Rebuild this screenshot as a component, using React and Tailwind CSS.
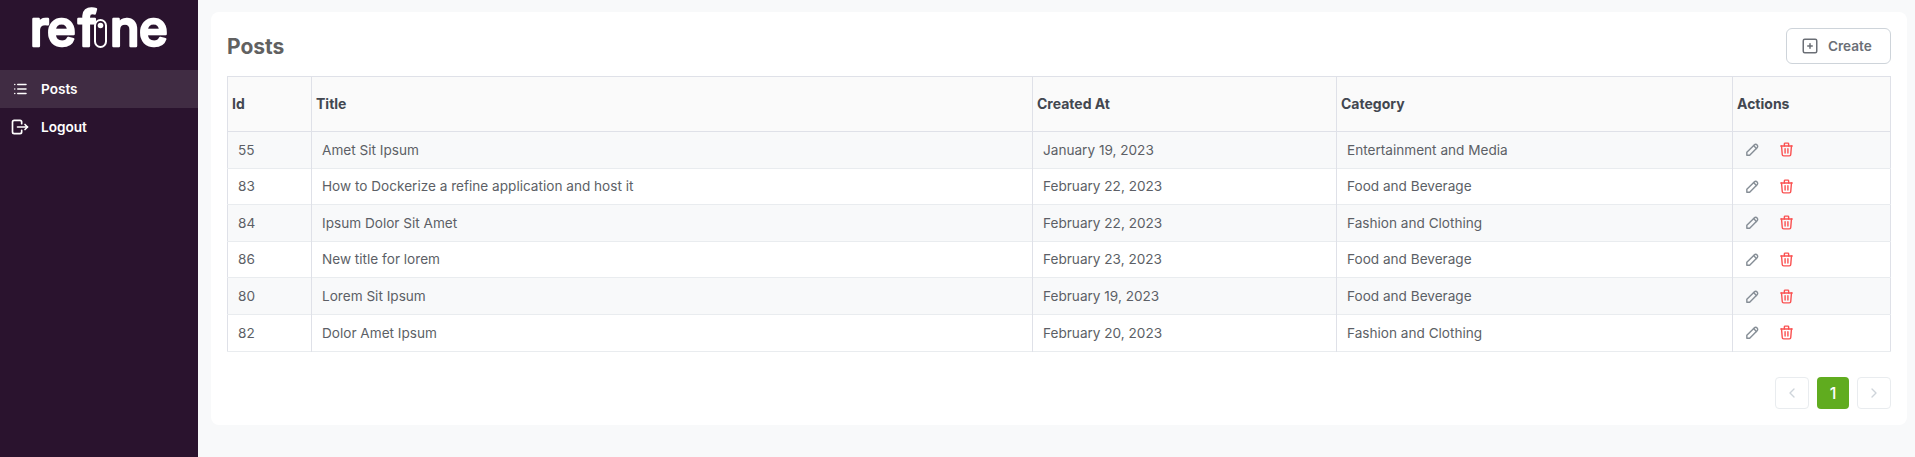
import { TbList, TbLogout, TbSquarePlus, TbPencil, TbTrash, TbChevronLeft, TbChevronRight } from "react-icons/tb";

const rows = [
  { id: 55, title: "Amet Sit Ipsum", createdAt: "January 19, 2023", category: "Entertainment and Media" },
  { id: 83, title: "How to Dockerize a refine application and host it", createdAt: "February 22, 2023", category: "Food and Beverage" },
  { id: 84, title: "Ipsum Dolor Sit Amet", createdAt: "February 22, 2023", category: "Fashion and Clothing" },
  { id: 86, title: "New title for lorem", createdAt: "February 23, 2023", category: "Food and Beverage" },
  { id: 80, title: "Lorem Sit Ipsum", createdAt: "February 19, 2023", category: "Food and Beverage" },
  { id: 82, title: "Dolor Amet Ipsum", createdAt: "February 20, 2023", category: "Fashion and Clothing" },
];

// the i of the logo is a pill, the letters stay real text with a rounded stroke
const Logo = () => (
  <svg width="198" height="70" viewBox="0 0 198 70" fill="white" stroke="white" strokeWidth="2.5" strokeLinejoin="round">
    <g style={{ fontFamily: "Inter, sans-serif", fontWeight: 500, fontSize: 49 }}>
      <text x="30 47 78" y="46">ref</text>
      <text x="110 139" y="46">ne</text>
    </g>
    <rect x="95" y="20" width="11" height="27" rx="5.5" fill="none" strokeWidth="2" />
    <circle cx="100.5" cy="25.5" r="2.8" stroke="none" />
  </svg>
);

const headCell = "border-r border-[#dfe1e8] px-[4px] text-left text-sm font-bold last:border-r-0";
const bodyCell = "border-r border-[#dfe1e8] px-[10px] last:border-r-0";

export default function App() {
  return (
    <div className="flex h-[457px] w-[1915px] overflow-hidden bg-[#f8f9fa] font-['Inter',sans-serif] text-[13.6px] text-[#5c5f66]">
      <aside className="flex w-[198px] shrink-0 flex-col bg-[#2a132e] text-white">
        <div className="h-[70px]">
          <Logo />
        </div>
        <nav className="flex flex-col text-[13.6px] font-semibold">
          <div className="flex h-[38px] items-center bg-[#402c43] pl-[11px]">
            <TbList size={18} className="mr-[12px]" />
            <span>Posts</span>
          </div>
          <div className="flex h-[38px] items-center pl-[10px]">
            <TbLogout size={20} className="mr-[11px]" />
            <span>Logout</span>
          </div>
        </nav>
      </aside>
      <main className="flex-1 pt-[12px] pr-[8px] pl-[13px]">
        <div className="h-[413px] rounded-lg bg-white px-[16px] pt-[16px]">
          <div className="flex h-[48px] items-start justify-between">
            <h1 className="mt-[4px] text-[21px] leading-[30px] font-bold text-[#616161]">Posts</h1>
            <button className="flex h-[36px] w-[105px] items-center gap-[9px] rounded-md border border-[#ced4da] pl-[14px] font-semibold text-[#6b6f76]">
              <TbSquarePlus size={18} />
              Create
            </button>
          </div>
          <table className="w-full table-fixed border-collapse border border-[#dfe1e8]">
            <colgroup>
              <col className="w-[84px]" />
              <col className="w-[721px]" />
              <col className="w-[304px]" />
              <col className="w-[396px]" />
              <col />
            </colgroup>
            <thead>
              <tr className="h-[55px] border-b border-[#dfe1e8] bg-[#fafafa] text-[#424750]">
                <th className={headCell}>Id</th>
                <th className={headCell}>Title</th>
                <th className={headCell}>Created At</th>
                <th className={headCell}>Category</th>
                <th className={headCell}>Actions</th>
              </tr>
            </thead>
            <tbody>
              {rows.map((row) => (
                <tr key={row.id} className="h-[36.6px] border-b border-[#e9ecef] odd:bg-[#f8f9fa]">
                  <td className={bodyCell}>{row.id}</td>
                  <td className={bodyCell}>{row.title}</td>
                  <td className={bodyCell}>{row.createdAt}</td>
                  <td className={bodyCell}>{row.category}</td>
                  <td className={bodyCell}>
                    <div className="flex items-center gap-[17px] pl-[1px] text-[#868e96]">
                      <TbPencil size={17} />
                      <TbTrash size={17} className="text-[#fa5252]" />
                    </div>
                  </td>
                </tr>
              ))}
            </tbody>
          </table>
          <div className="mt-[25px] flex justify-end gap-[8px]">
            <div className="flex h-[32px] w-[34px] items-center justify-center rounded border border-[#e9ecef] text-[#ced4da]">
              <TbChevronLeft size={16} />
            </div>
            <div className="flex h-[32px] w-[32px] items-center justify-center rounded bg-[#60ac1f] text-base font-medium text-white">1</div>
            <div className="flex h-[32px] w-[34px] items-center justify-center rounded border border-[#e9ecef] text-[#ced4da]">
              <TbChevronRight size={16} />
            </div>
          </div>
        </div>
      </main>
    </div>
  );
}
